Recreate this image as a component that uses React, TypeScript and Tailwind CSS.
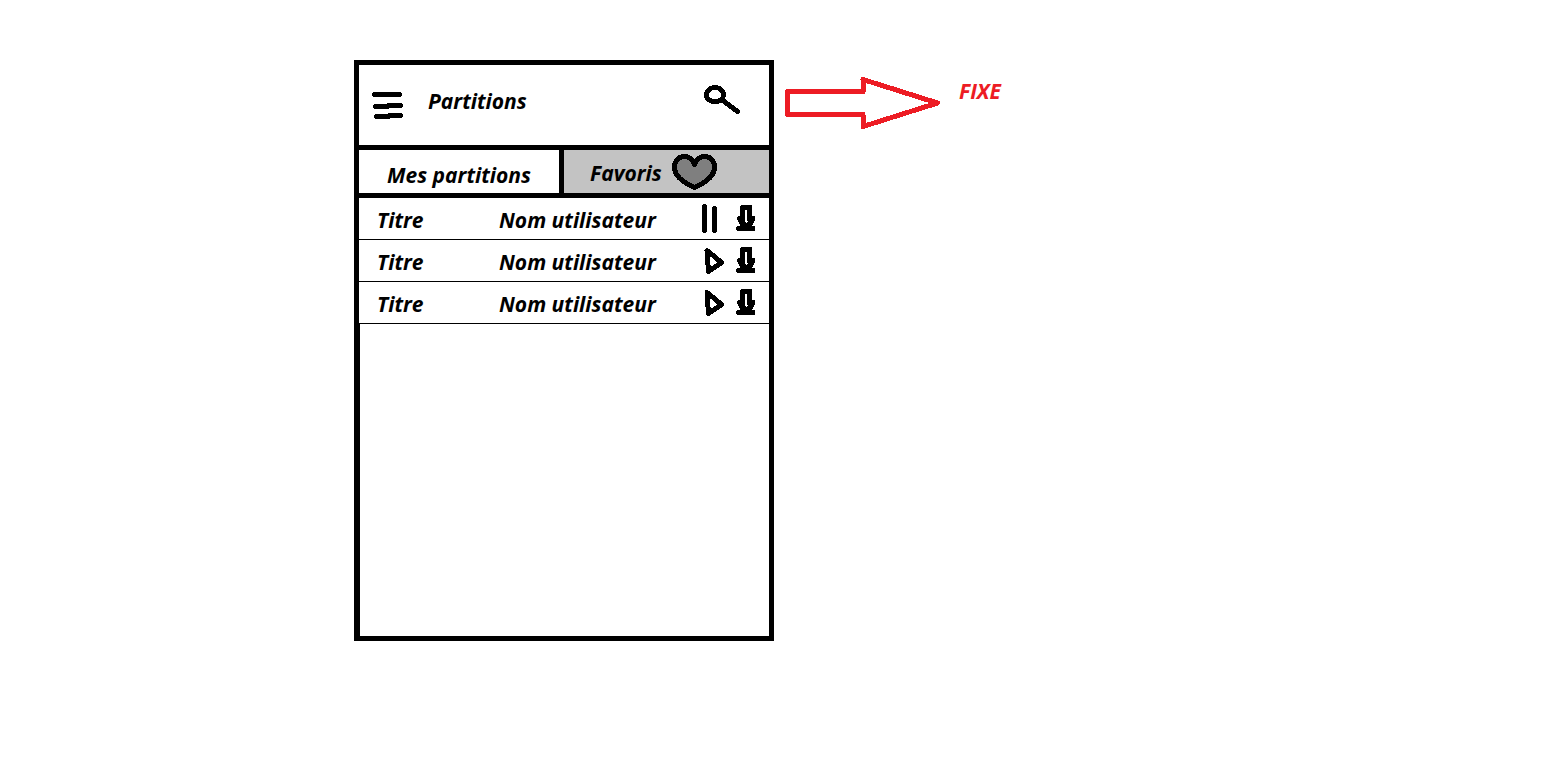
import { useState } from "react";

const scores = [
  { id: 1, title: "Titre", user: "Nom utilisateur", playing: true },
  { id: 2, title: "Titre", user: "Nom utilisateur", playing: false },
  { id: 3, title: "Titre", user: "Nom utilisateur", playing: false },
];

function MenuIcon() {
  return (
    <svg width="32" height="28" viewBox="0 0 32 28" fill="none" stroke="black" strokeWidth="5" strokeLinecap="round" shapeRendering="crispEdges" aria-hidden="true">
      <path d="M2.5 2.5H27.5M3.5 14.5H15M17 13.5H28.5M4.5 24.5H16M18 23.5H28.5" />
    </svg>
  );
}

function SearchIcon() {
  return (
    <svg width="36" height="30" viewBox="0 0 36 30" fill="none" stroke="black" strokeWidth="5" strokeLinecap="round" shapeRendering="crispEdges" aria-hidden="true">
      <ellipse cx="11" cy="9.7" rx="8.5" ry="7.2" />
      <path d="M18 15L33.5 26.5" />
    </svg>
  );
}

function HeartIcon() {
  return (
    <svg width="46" height="38" viewBox="0 0 46 38" fill="#7f7f7f" stroke="black" strokeWidth="5" strokeLinejoin="round" shapeRendering="crispEdges" aria-hidden="true">
      <path d="M22.5 11.5C20 5.5 16.5 3.5 12.5 3.5C7 3.5 2.5 7.5 2.5 14C2.5 23.5 11 29.5 22.5 34.5C34 29.5 42.5 23.5 42.5 14C42.5 7.5 38 3.5 32.5 3.5C28.5 3.5 25 5.5 22.5 11.5Z" />
    </svg>
  );
}

function PauseIcon() {
  return (
    <svg width="24" height="30" viewBox="0 0 24 30" fill="none" stroke="black" strokeWidth="5" strokeLinecap="round" shapeRendering="crispEdges" aria-hidden="true">
      <path d="M2.5 2.5V26.5M12.5 4.5V26.5" />
    </svg>
  );
}

function PlayIcon() {
  return (
    <svg width="24" height="30" viewBox="0 0 24 30" fill="none" stroke="black" strokeWidth="5" strokeLinejoin="round" shapeRendering="crispEdges" aria-hidden="true">
      <path d="M5 4.500L19.500 16.500L6.500 25.500Z" />
    </svg>
  );
}

function DownloadIcon() {
  return (
    <svg width="20" height="28" viewBox="0 0 20 28" shapeRendering="crispEdges" aria-hidden="true">
      <path d="M5 0H15L16 1V11H18L19 12V15L18 16V17L17 18V19L16 20V21H18L19 22V25L18 26H1L0 25V22L1 21H4V20L3 19V18L2 17V16L1 15V12L2 11H4V1Z" fill="black" />
      <path d="M9 5H11V16H12V17H11V18H10V17H9Z" fill="white" />
    </svg>
  );
}

function Arrow() {
  return (
    <svg width="158" height="52" viewBox="0 0 158 52" fill="none" stroke="#ed1c24" strokeWidth="5" strokeLinejoin="round" shapeRendering="crispEdges" aria-hidden="true">
      <path d="M2.5 14.5H78V2.5L152.5 26L78 49.5V37.5H2.5Z" />
    </svg>
  );
}

export default function App() {
  const [playing, setPlaying] = useState(scores.map((s) => s.playing));
  const [tab, setTab] = useState("mes");

  return (
    <div className="flex min-h-screen items-start bg-white pt-[60px] pl-[354px] font-['Open_Sans','Noto_Sans',sans-serif] text-[21px] leading-6 font-bold text-black italic">
      <main className="flex min-h-[581px] w-full max-w-[420px] flex-col border-[5px] border-black">
        <header className="flex h-[85px] items-center border-b-[5px] border-black pr-[29px] pl-[13px]">
          <button type="button" aria-label="Menu" className="mt-0.5">
            <MenuIcon />
          </button>
          <h1 className="mb-2 ml-6 flex-1">Partitions</h1>
          <button type="button" aria-label="Rechercher" className="mb-2.5">
            <SearchIcon />
          </button>
        </header>

        <nav className="flex h-12 border-b-[5px] border-black">
          <button type="button" aria-pressed={tab === "mes"} onClick={() => setTab("mes")} className="w-1/2 border-r-[5px] border-black pt-1.5">
            Mes partitions
          </button>
          <button type="button" aria-pressed={tab === "favoris"} onClick={() => setTab("favoris")} className="flex w-1/2 items-center gap-2.5 bg-[#c3c3c3] pl-[26px]">
            <span className="pt-0.5">Favoris</span>
            <HeartIcon />
          </button>
        </nav>

        <ul>
          {scores.map((score, i) => (
            <li key={score.id} className="flex h-[42px] items-center border-b border-black pr-[13px] pl-[18px]">
              <span className="w-[122px] pt-0.5">{score.title}</span>
              <span className="flex-1 pt-0.5">{score.user}</span>
              <button
                type="button"
                aria-label={playing[i] ? "Pause" : "Lecture"}
                onClick={() => setPlaying(playing.map((p, j) => (j === i ? !p : p)))}
                className="mr-2.5"
              >
                {playing[i] ? <PauseIcon /> : <PlayIcon />}
              </button>
              <button type="button" aria-label="Télécharger">
                <DownloadIcon />
              </button>
            </li>
          ))}
        </ul>

        <div className="flex-1 border-l border-black" />
      </main>

      <aside className="flex shrink-0 items-start gap-4 pt-[17px] pl-[11px] text-[#ed1c24]">
        <Arrow />
        <p className="pt-0.5">FIXE</p>
      </aside>
    </div>
  );
}
